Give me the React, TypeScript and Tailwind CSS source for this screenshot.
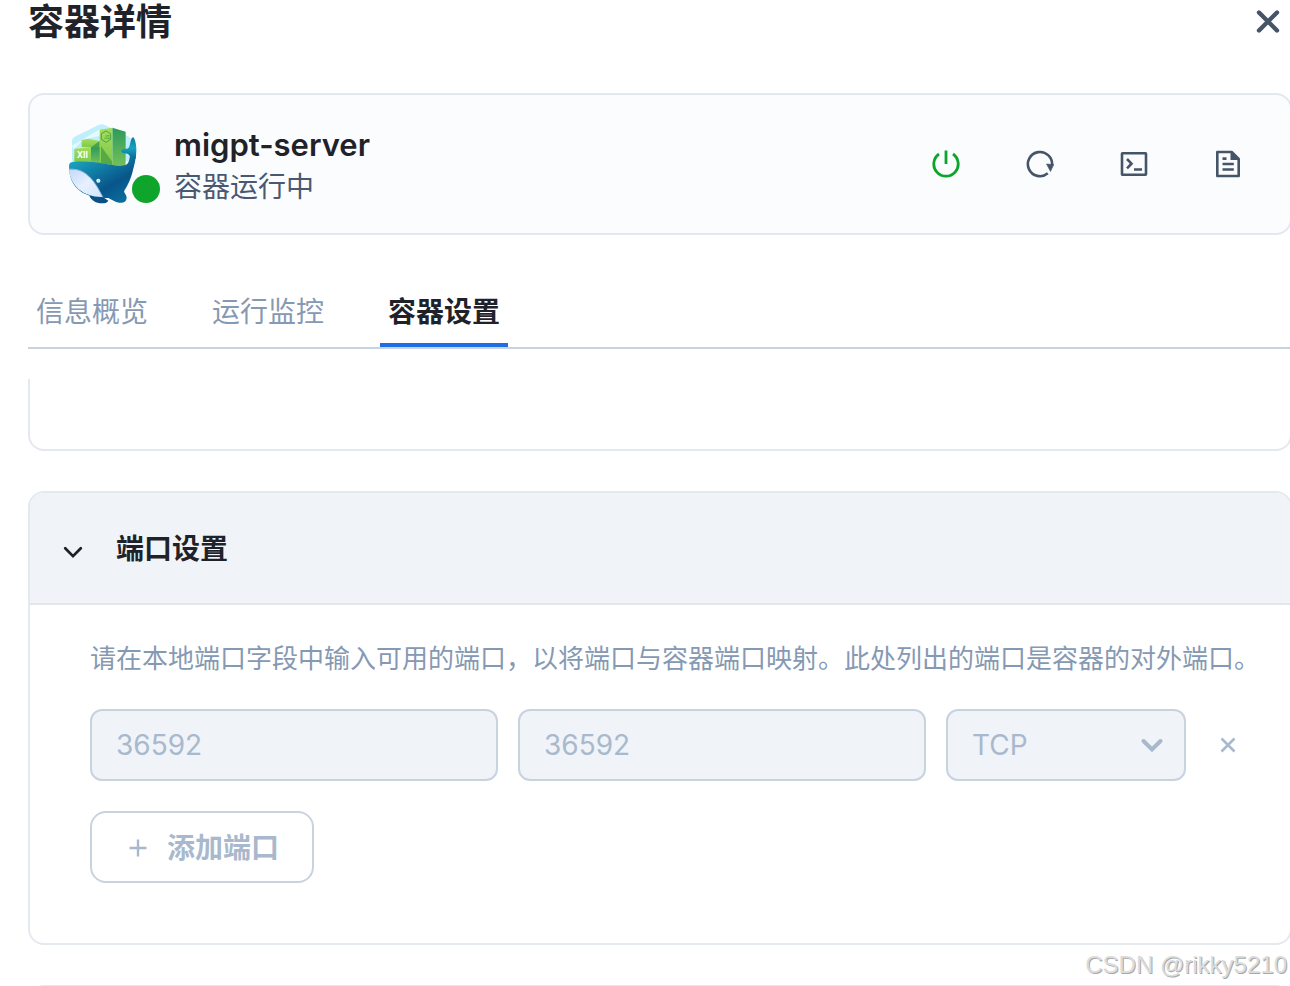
import { useState } from 'react';

const tabs = ['信息概览', '运行监控', '容器设置'];

function WhaleLogo() {
  return (
    <svg viewBox="24 27 210 240" className="w-[70px] h-20" aria-hidden="true">
      <defs>
        <linearGradient id="body" x1="0" y1="0" x2="0.8" y2="1">
          <stop offset="0.1" stopColor="#1ba6c0" />
          <stop offset="0.7" stopColor="#08558a" />
          <stop offset="1" stopColor="#0b6f9e" />
        </linearGradient>
        <linearGradient id="tail" x1="0" y1="0" x2="0" y2="1">
          <stop offset="0" stopColor="#0c7aa5" />
          <stop offset="0.5" stopColor="#17a3bd" />
          <stop offset="1" stopColor="#0a6697" />
        </linearGradient>
        <linearGradient id="belly" x1="0" y1="0" x2="1" y2="1">
          <stop offset="0" stopColor="#c3d8f8" />
          <stop offset="0.5" stopColor="#e6f0ff" />
          <stop offset="1" stopColor="#d3e6fb" />
        </linearGradient>
        <linearGradient id="boxDark" x1="0" y1="0" x2="0" y2="1">
          <stop offset="0" stopColor="#2b9a5c" />
          <stop offset="1" stopColor="#74c05a" />
        </linearGradient>
        <linearGradient id="boxLight" x1="0" y1="0" x2="0" y2="1">
          <stop offset="0" stopColor="#a5dc5b" />
          <stop offset="1" stopColor="#7cc94c" />
        </linearGradient>
      </defs>
      <path d="M36 148V78q0-9 8-13l70-34q11-6 22 0l70 34q8 4 8 13v60Z" fill="#bfeffc" />
      <path d="M36 92 120 42v20L70 74l-30 30Z" fill="#e3faff" />
      <path d="m157 38 40 12v104l-40-4Z" fill="url(#boxDark)" />
      <path d="m65 75 20-4 33 7v21l-53-3Z" fill="url(#boxLight)" />
      <path d="m91 98 28-20v66H91Z" fill="#46a346" />
      <path d="m93 99 30-2v48H93Z" fill="url(#boxDark)" />
      <path d="m119 44 38-6v112l-38-6Z" fill="url(#boxLight)" />
      <path d="m123 94 34 46v10l-34-6Z" fill="#56a944" />
      <path d="M43 101 93 97v46H43Z" fill="url(#boxLight)" />
      <text x="50" y="130" fontSize="26" fontWeight="700" fill="#fff" fontFamily="Inter, sans-serif">XII</text>
      <path d="m138 48 14 8v17l-14 9-14-9V56Z" fill="none" stroke="#3f993b" strokeWidth="2.5" />
      <text x="131" y="71" fontSize="15" fill="#3f993b" fontFamily="Inter, sans-serif">JS</text>
      <path d="M88 242c5 13 20 23 38 23 10 0 17-3 19-8l-24-16Z" fill="#0a4f86" />
      <path
        d="M27 153q0-12 12-12c35-3 65 0 105 7 22 4 38 6 51 3 10-4 14-14 15-34h18c-1 18-5 33-9 48-5 25-17 48-26 62-3 6 8 12 7 22-2 13-10 15-23 14-12-1-20-9-32-14-45 0-118-9-118-96Z"
        fill="url(#body)"
      />
      <path
        d="M210 124c-3-6-8-9-16-9-7-1-10-4-10-7 0-6 9-7 17-7 5 0 7-5 9-14 3-12 5-20 9-20 4 0 10 18 10 34 0 12-1 22-2 30Z"
        fill="url(#tail)"
      />
      <path d="M27 163c48-5 76 32 101 83-59 1-98-34-101-83Z" fill="url(#belly)" />
      <path d="M27 163c48-5 76 32 101 83" fill="none" stroke="#8bb4ea" strokeWidth="3" />
      <circle cx="115" cy="197" r="6" fill="#fff" />
      <circle cx="116" cy="197" r="2.5" fill="#9ed5ee" />
    </svg>
  );
}

function PowerIcon() {
  return (
    <svg viewBox="0 0 28 28" className="w-7 h-7" fill="none" stroke="currentColor" strokeWidth="2.8">
      <path d="M14 0.5v13.5M7 4a12.2 12.2 0 1 0 14 0" />
    </svg>
  );
}

function RestartIcon() {
  return (
    <svg viewBox="0 0 28 28" className="w-7 h-7" fill="none" stroke="currentColor" strokeWidth="2.6">
      <path d="M21.8 23.3A12.1 12.1 0 1 1 26 15.5" />
      <path d="m20.5 14 7.2.5-3.2 7Z" fill="currentColor" strokeWidth="0.6" />
    </svg>
  );
}

function TerminalIcon() {
  return (
    <svg viewBox="0 0 28 28" className="w-7 h-7" fill="none" stroke="currentColor" strokeWidth="2.6">
      <rect x="2" y="3.3" width="24" height="21.4" rx="0.5" />
      <path d="m7 9 4.5 4.7L7 18.4M14 19.5h8" />
    </svg>
  );
}

function LogIcon() {
  return (
    <svg viewBox="0 0 28 28" className="w-7 h-7" fill="none" stroke="currentColor" strokeWidth="2.6" strokeLinejoin="round">
      <path d="M3.3 2h14.4l7 7v17H3.3Z" />
      <path d="M16.5 1.5V10H25Z" fill="currentColor" strokeWidth="0" />
      <path d="M8.5 8.6h4M8.5 14h11.3M8.5 19.5h11.3" />
    </svg>
  );
}

function Chevron({ className, strokeWidth }: { className: string; strokeWidth: number }) {
  return (
    <svg viewBox="0 0 24 24" className={className} fill="none" stroke="currentColor" strokeWidth={strokeWidth} strokeLinecap="round">
      <path d="m3.5 8 8.5 8.5L20.5 8" />
    </svg>
  );
}

const actions = [
  { label: '停止', icon: <PowerIcon />, color: 'text-[#0ca52b]' },
  { label: '重启', icon: <RestartIcon />, color: 'text-[#465468]' },
  { label: '终端', icon: <TerminalIcon />, color: 'text-[#465468]' },
  { label: '日志', icon: <LogIcon />, color: 'text-[#465468]' },
];

export default function App() {
  const [active, setActive] = useState('容器设置');
  const [open, setOpen] = useState(true);

  return (
    <div className="relative h-screen overflow-hidden bg-white flex flex-col pl-7 text-[28px] text-[#1f2329] font-['Inter','Noto_Sans_CJK_SC',sans-serif]">
      {/* Header */}
      <header className="flex items-center justify-between h-11 shrink-0">
        <h1 className="text-4xl leading-[44px] font-semibold">容器详情</h1>
        <button type="button" aria-label="关闭" className="w-11 h-11 flex items-center justify-center text-[#465468]">
          <svg viewBox="0 0 24 24" className="w-6 h-6" fill="none" stroke="currentColor" strokeWidth="4.4" strokeLinecap="round">
            <path d="m3 2.5 18 18M21 2.5l-18 18" />
          </svg>
        </button>
      </header>

      {/* Container summary */}
      <section className="mt-[49px] -mr-0.5 h-[142px] shrink-0 flex items-center border-2 border-[#e2e8f0] rounded-2xl bg-[#fbfcfe] pl-[38px] pr-10">
        <div className="relative w-[92px]">
          <WhaleLogo />
          <span className="absolute right-0 bottom-px w-7 h-7 rounded-full bg-[#0fa52b]"></span>
        </div>
        <div className="ml-3.5 pt-1 flex-1">
          <h2 className="text-[31px] leading-[42px] font-semibold">migpt-server</h2>
          <p className="leading-[42px] text-[#4a5870]">容器运行中</p>
        </div>
        <div className="flex gap-[50px]">
          {actions.map((action) => (
            <button
              key={action.label}
              type="button"
              aria-label={action.label}
              className={`w-11 h-11 flex items-center justify-center ${action.color}`}
            >
              {action.icon}
            </button>
          ))}
        </div>
      </section>

      {/* Tabs */}
      <nav className="mt-10 h-[74px] shrink-0 flex gap-12 border-b-2 border-[#c8d3e0]">
        {tabs.map((tab) => (
          <button
            key={tab}
            type="button"
            onClick={() => setActive(tab)}
            className={`px-2 pt-1.5 border-b-4 ${
              active === tab
                ? 'border-[#1f6fe0] font-semibold text-[#1f2329]'
                : 'border-transparent text-[#8699b3]'
            }`}
          >
            {tab}
          </button>
        ))}
      </nav>

      {/* Settings */}
      <main className="mt-[30px] -mr-0.5 flex-1 min-h-0 overflow-hidden">
        <div className="h-[72px] border-2 border-t-0 border-[#e4e9f0] rounded-b-2xl"></div>

        <section className="mt-10 border-2 border-[#e4e9f0] rounded-2xl overflow-hidden">
          <h3>
            <button
              type="button"
              aria-expanded={open}
              onClick={() => setOpen(!open)}
              className="w-full h-28 flex items-center gap-8 pt-0.5 pl-8 bg-[#f0f3f8] border-b-2 border-[#e2e5e9] font-semibold"
            >
              <Chevron className="mt-1.5 w-[22px] h-[22px]" strokeWidth={3} />
              端口设置
            </button>
          </h3>
          {open && (
            <div className="pt-8 pb-15 pl-15 pr-7">
              <p className="pt-px text-[26px] leading-[42px] text-[#8699b3]">
                请在本地端口字段中输入可用的端口，以将端口与容器端口映射。此处列出的端口是容器的对外端口。
              </p>
              <div className="mt-[29px] mr-3 flex gap-5 text-[#a9b9cd]">
                <input
                  aria-label="本地端口"
                  defaultValue="36592"
                  disabled
                  className="flex-1 min-w-0 h-[72px] px-6 border-2 border-[#c8d3e0] rounded-xl bg-[#f0f3f8]"
                />
                <input
                  aria-label="容器端口"
                  defaultValue="36592"
                  disabled
                  className="flex-1 min-w-0 h-[72px] px-6 border-2 border-[#c8d3e0] rounded-xl bg-[#f0f3f8]"
                />
                <div className="relative w-60">
                  <select
                    aria-label="协议"
                    disabled
                    className="w-full h-[72px] px-6 appearance-none border-2 border-[#c8d3e0] rounded-xl bg-[#f0f3f8] opacity-100"
                  >
                    <option>TCP</option>
                    <option>UDP</option>
                  </select>
                  <Chevron className="absolute right-5 top-6 w-7 h-6 pointer-events-none" strokeWidth={4} />
                </div>
                <button type="button" aria-label="删除" disabled className="w-11 flex items-center justify-center">
                  <svg viewBox="0 0 16 16" className="w-4 h-4" fill="none" stroke="currentColor" strokeWidth="2.6">
                    <path d="m1.5 1.5 13 13M14.5 1.5l-13 13" />
                  </svg>
                </button>
              </div>
              <button
                type="button"
                disabled
                className="mt-[30px] h-[72px] w-56 pl-1 pt-0.5 flex items-center justify-center gap-5 border-2 border-[#c8d3e0] rounded-2xl font-semibold text-[#a9b9cd]"
              >
                <svg viewBox="0 0 18 18" className="w-[18px] h-[18px]" fill="none" stroke="currentColor" strokeWidth="2.4">
                  <path d="M9 0.5v17M0.5 9h17" />
                </svg>
                添加端口
              </button>
            </div>
          )}
        </section>

        <div className="mt-10 h-28 border-2 border-[#e4e9f0] rounded-2xl"></div>
      </main>

      <span className="absolute right-[3px] bottom-1 text-2xl leading-[34px] text-[#dcdcdc] font-['Liberation_Sans',sans-serif] [text-shadow:1px_1px_0_#a8a8a8]">
        CSDN @rikky5210
      </span>
    </div>
  );
}
